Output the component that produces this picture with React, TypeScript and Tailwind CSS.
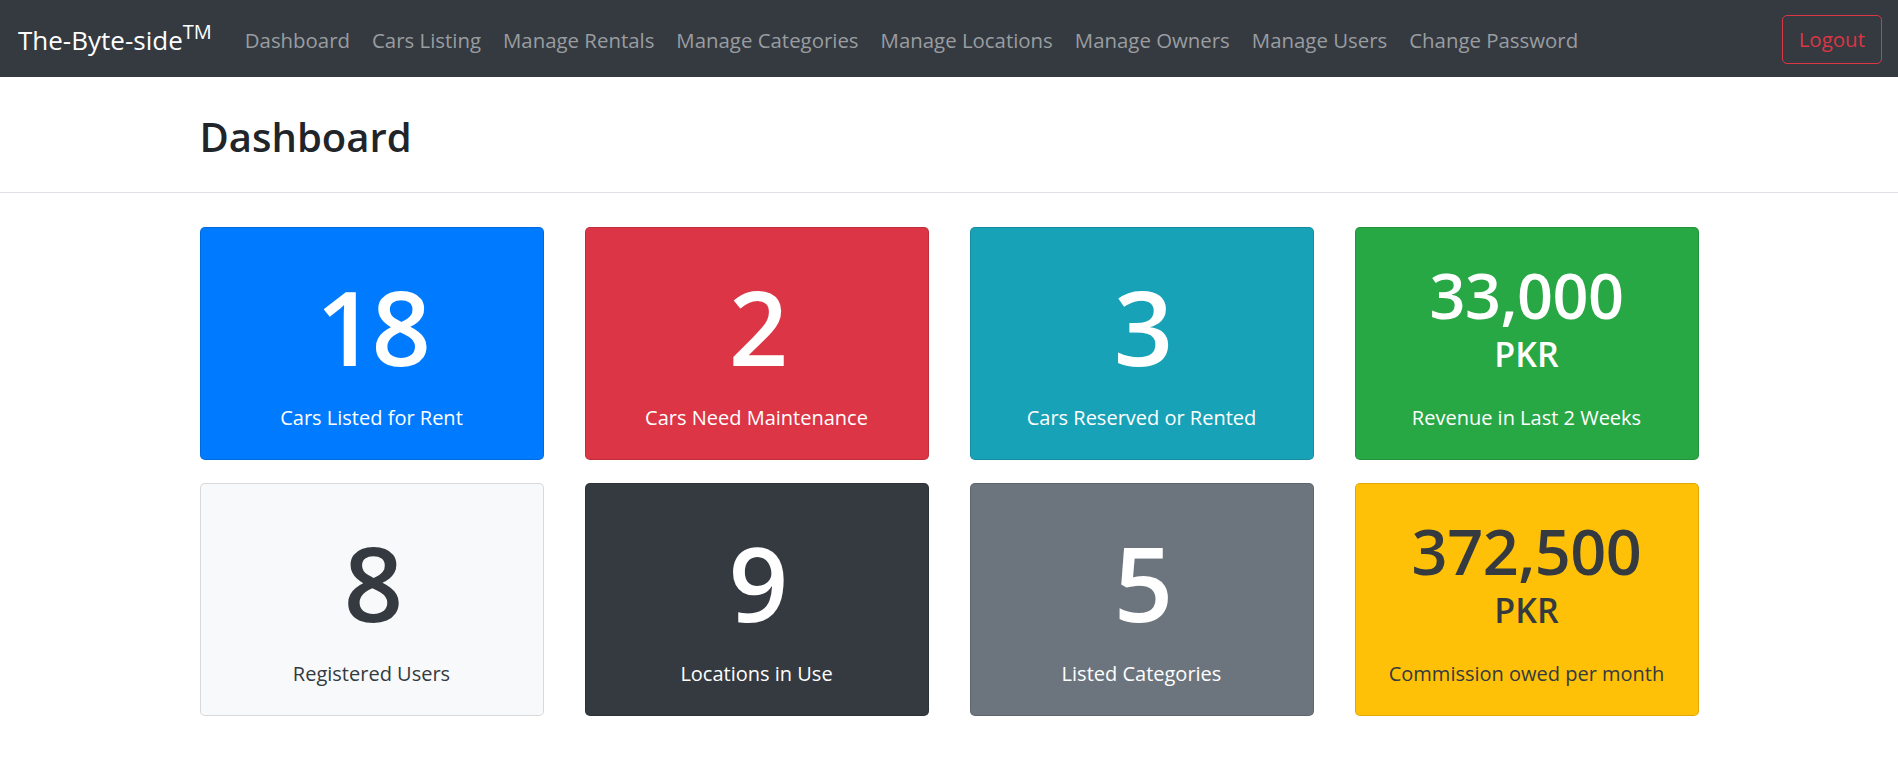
const navLinks = [
  "Dashboard",
  "Cars Listing",
  "Manage Rentals",
  "Manage Categories",
  "Manage Locations",
  "Manage Owners",
  "Manage Users",
  "Change Password",
];

type Stat = {
  value: string;
  unit?: string;
  label: string;
  card: string;
};

const stats: Stat[] = [
  { value: "18", label: "Cars Listed for Rent", card: "bg-[#007bff] text-white" },
  { value: "2", label: "Cars Need Maintenance", card: "bg-[#dc3545] text-white" },
  { value: "3", label: "Cars Reserved or Rented", card: "bg-[#17a2b8] text-white" },
  { value: "33,000", unit: "PKR", label: "Revenue in Last 2 Weeks", card: "bg-[#28a745] text-white" },
  { value: "8", label: "Registered Users", card: "bg-[#f8f9fa] text-[#343a40]" },
  { value: "9", label: "Locations in Use", card: "bg-[#343a40] text-white" },
  { value: "5", label: "Listed Categories", card: "bg-[#6c757d] text-white" },
  { value: "372,500", unit: "PKR", label: "Commission owed per month", card: "bg-[#ffc107] text-[#343a40]" },
];

function StatCard({ stat }: { stat: Stat }) {
  return (
    <div
      className={`h-[233px] rounded-[5px] border border-[rgba(0,0,0,0.125)] flex flex-col items-center text-center ${stat.card}`}
    >
      {stat.unit ? (
        <>
          <div className="mt-[35px] text-[63px] leading-none font-semibold tracking-[-0.5px]">{stat.value}</div>
          <div className="mt-[11px] text-[34px] leading-none font-semibold">{stat.unit}</div>
          <p className="mt-[32px] text-[20px] leading-[30px]">{stat.label}</p>
        </>
      ) : (
        <>
          <div className="mt-[46px] text-[104px] leading-none font-semibold tracking-[-4px]">{stat.value}</div>
          <p className="mt-[25px] text-[20px] leading-[30px]">{stat.label}</p>
        </>
      )}
    </div>
  );
}

export default function App() {
  return (
    <div className="min-h-screen bg-white font-['Open_Sans',sans-serif] text-[#212529]">
      <nav className="h-[77px] bg-[#343a40] flex items-center pl-[18px] pr-[16px] pt-[2px]">
        <a className="text-white text-[26px] leading-none mr-[22px] whitespace-nowrap">
          The-Byte-side<sup className="text-[20px] relative -top-[11px]">TM</sup>
        </a>
        <ul className="flex items-center">
          {navLinks.map(link => (
            <li key={link}>
              <a className="block px-[11px] text-[20.4px] leading-[30px] text-[#9a9da0] whitespace-nowrap">
                {link}
              </a>
            </li>
          ))}
        </ul>
        <button className="ml-auto h-[49px] px-[16px] rounded-[5px] border border-[#dc3545] text-[#dc3545] text-[20.5px] leading-none">
          Logout
        </button>
      </nav>

      <div className="border-b border-[#dee2e6]">
        <div className="w-[1499px] mx-auto h-[115px] flex items-center">
          <h1 className="text-[40px] leading-none font-semibold text-[#212529] pt-[4px]">Dashboard</h1>
        </div>
      </div>

      <div className="w-[1499px] mx-auto mt-[34px] grid grid-cols-4 gap-x-[41px] gap-y-[23px]">
        {stats.map(stat => (
          <StatCard key={stat.label} stat={stat} />
        ))}
      </div>
    </div>
  );
}
